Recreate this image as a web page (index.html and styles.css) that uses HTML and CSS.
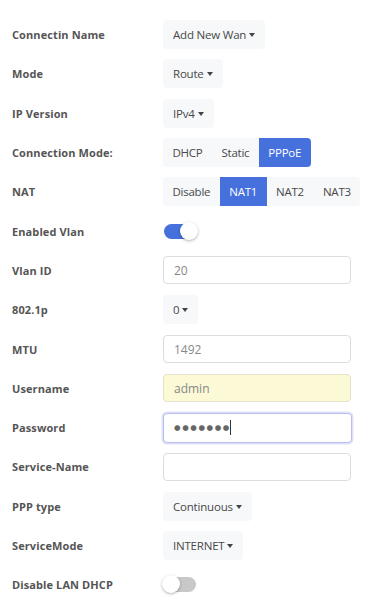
FILE: index.html
```html
<!DOCTYPE html>
<html>
<head>
<meta charset="utf-8">
<link rel="stylesheet" href="styles.css">
</head>
<body>
<form class="form">
  <div class="row"><label class="lbl">Connectin Name</label><div class="ctl"><span class="dd">Add New Wan<i class="caret"></i></span></div></div>
  <div class="row"><label class="lbl">Mode</label><div class="ctl"><span class="dd">Route<i class="caret"></i></span></div></div>
  <div class="row"><label class="lbl">IP Version</label><div class="ctl"><span class="dd">IPv4<i class="caret"></i></span></div></div>
  <div class="row"><label class="lbl">Connection Mode:</label><div class="ctl"><div class="seg"><span class="sb">DHCP</span><span class="sb">Static</span><span class="sb on round">PPPoE</span></div></div></div>
  <div class="row"><label class="lbl">NAT</label><div class="ctl"><div class="seg"><span class="sb">Disable</span><span class="sb on">NAT1</span><span class="sb">NAT2</span><span class="sb">NAT3</span></div></div></div>
  <div class="row"><label class="lbl">Enabled Vlan</label><div class="ctl"><span class="tg tg-on"><span class="knob"></span></span></div></div>
  <div class="row"><label class="lbl">Vlan ID</label><div class="ctl"><div class="inp">20</div></div></div>
  <div class="row"><label class="lbl">802.1p</label><div class="ctl"><span class="dd">0<i class="caret"></i></span></div></div>
  <div class="row"><label class="lbl">MTU</label><div class="ctl"><div class="inp">1492</div></div></div>
  <div class="row"><label class="lbl">Username</label><div class="ctl"><div class="inp auto">admin</div></div></div>
  <div class="row"><label class="lbl">Password</label><div class="ctl"><div class="inp focus"><span class="dots">●●●●●●●</span><span class="cursor"></span></div></div></div>
  <div class="row"><label class="lbl">Service-Name</label><div class="ctl"><div class="inp"></div></div></div>
  <div class="row"><label class="lbl">PPP type</label><div class="ctl"><span class="dd">Continuous<i class="caret"></i></span></div></div>
  <div class="row"><label class="lbl">ServiceMode</label><div class="ctl"><span class="dd">INTERNET<i class="caret"></i></span></div></div>
  <div class="row"><label class="lbl">Disable LAN DHCP</label><div class="ctl"><span class="tg"><span class="knob"></span></span></div></div>
</form>
</body>
</html>
```
FILE: styles.css
```css
html, body { margin: 0; padding: 0; background: #fff; }
body { font-family: "Open Sans", "Noto Sans", sans-serif; color: #444; width: 380px; height: 605px; overflow: hidden; }
.form { padding-top: 15px; }
.row { display: grid; grid-template-columns: 163px 1fr; align-items: center; height: 39.3px; }
.lbl { padding-left: 12px; font-size: 11px; font-weight: 700; color: #555; letter-spacing: 0.1px; }
.ctl { display: flex; align-items: center; }
.dd { display: inline-flex; align-items: center; height: 29px; padding: 0 10px 0 10px; background: #f7f8fa; border-radius: 4px; font-size: 11.5px; letter-spacing: -0.2px; color: #484848; }
.caret { display: inline-block; width: 0; height: 0; border-left: 3.5px solid transparent; border-right: 3.5px solid transparent; border-top: 4px solid #444; margin-left: 3px; margin-top: 1px; }
.seg { display: flex; background: #f7f8fa; height: 29px; border-radius: 4px; }
.sb { display: flex; align-items: center; padding: 0 9.5px; font-size: 11.5px; letter-spacing: -0.25px; color: #484848; }
.sb.on { background: #4670dc; color: #fff; }
.sb.round { border-radius: 0 4px 4px 0; }
.tg { position: relative; display: inline-block; width: 32px; height: 15px; border-radius: 8px; background: #c8c8c8; margin-left: 1px; }
.tg-on { background: #4670dc; }
.knob { position: absolute; top: -2px; left: -2px; width: 18px; height: 18px; border-radius: 50%; background: #fff; box-shadow: 0 1px 3px rgba(0,0,0,0.3); }
.tg-on .knob { left: auto; right: -2px; }
.inp { box-sizing: border-box; width: 188px; height: 28px; border: 1px solid #dcdde0; border-radius: 4px; padding-left: 10px; display: flex; align-items: center; font-size: 12px; color: #888; background: #fff; }
.inp.auto { background: #fbf9d6; border-color: #e4e2c8; }
.inp.focus { border-color: #b9bdf0; box-shadow: 0 0 0 1.5px #dfe1f8; height: 30px; width: 189px; }
.dots { font-family: "DejaVu Sans", sans-serif; font-size: 7.5px; letter-spacing: 1.6px; color: #666; }
.cursor { display: inline-block; width: 1px; height: 15px; background: #333; margin-left: -1px; }
```
